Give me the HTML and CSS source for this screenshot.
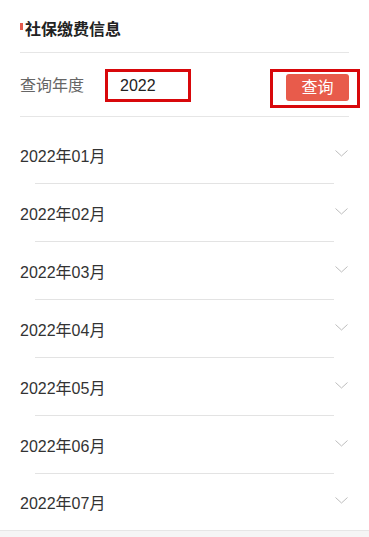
FILE: index.html
```html
<!DOCTYPE html>
<html lang="zh-CN">
<head>
<meta charset="utf-8">
<link rel="stylesheet" href="styles.css">
</head>
<body>
<div class="card">
  <div class="header">
    <span class="bar"></span>
    <span class="title">社保缴费信息</span>
  </div>
  <div class="query">
    <span class="label">查询年度</span>
    <div class="year-box">2022</div>
    <div class="btn-box"><button class="btn">查询</button></div>
  </div>
  <div class="list">
    <div class="row"><span>2022年01月</span><svg class="chev" width="13" height="7" viewBox="0 0 13 7"><polyline points="0.5,0.5 6.5,6 12.5,0.5" fill="none" stroke="#bdbdbd" stroke-width="1"/></svg></div>
    <div class="sep"></div>
    <div class="row"><span>2022年02月</span><svg class="chev" width="13" height="7" viewBox="0 0 13 7"><polyline points="0.5,0.5 6.5,6 12.5,0.5" fill="none" stroke="#bdbdbd" stroke-width="1"/></svg></div>
    <div class="sep"></div>
    <div class="row"><span>2022年03月</span><svg class="chev" width="13" height="7" viewBox="0 0 13 7"><polyline points="0.5,0.5 6.5,6 12.5,0.5" fill="none" stroke="#bdbdbd" stroke-width="1"/></svg></div>
    <div class="sep"></div>
    <div class="row"><span>2022年04月</span><svg class="chev" width="13" height="7" viewBox="0 0 13 7"><polyline points="0.5,0.5 6.5,6 12.5,0.5" fill="none" stroke="#bdbdbd" stroke-width="1"/></svg></div>
    <div class="sep"></div>
    <div class="row"><span>2022年05月</span><svg class="chev" width="13" height="7" viewBox="0 0 13 7"><polyline points="0.5,0.5 6.5,6 12.5,0.5" fill="none" stroke="#bdbdbd" stroke-width="1"/></svg></div>
    <div class="sep"></div>
    <div class="row"><span>2022年06月</span><svg class="chev" width="13" height="7" viewBox="0 0 13 7"><polyline points="0.5,0.5 6.5,6 12.5,0.5" fill="none" stroke="#bdbdbd" stroke-width="1"/></svg></div>
    <div class="sep"></div>
    <div class="row last"><span>2022年07月</span><svg class="chev" width="13" height="7" viewBox="0 0 13 7"><polyline points="0.5,0.5 6.5,6 12.5,0.5" fill="none" stroke="#bdbdbd" stroke-width="1"/></svg></div>
  </div>
</div>
</body>
</html>
```

FILE: styles.css
```css
html, body {
  margin: 0;
  padding: 0;
  background: #f5f5f5;
  font-family: "Liberation Sans", "Noto Sans CJK SC", sans-serif;
}

.card {
  background: #fff;
  border-bottom: 1px solid #e6e6e6;
  padding: 0 20px;
  overflow: hidden;
}

.header {
  height: 45px;
  padding-top: 7px;
  display: flex;
  align-items: center;
  border-bottom: 1px solid #e6e6e6;
}

.bar {
  width: 3px;
  height: 7px;
  background: #e55a4b;
  margin-right: 2px;
  margin-top: -7px;
}

.title {
  font-size: 16px;
  font-weight: bold;
  color: #222;
  line-height: 20px;
}

.query {
  display: flex;
  align-items: flex-start;
  height: 47px;
  padding-top: 16px;
  border-bottom: 1px solid #e6e6e6;
}

.label {
  font-size: 16px;
  color: #666;
  line-height: 33px;
  width: 64px;
}

.year-box {
  margin-left: 21px;
  width: 68px;
  height: 27px;
  border: 3px solid #d8080b;
  padding-left: 12px;
  font-size: 16px;
  line-height: 27px;
  color: #222;
}

.btn-box {
  margin-left: auto;
  margin-right: -11px;
  width: 76px;
  height: 31px;
  border: 3px solid #d8080b;
  padding: 2px 8px 0 0;
  display: flex;
  justify-content: flex-end;
}

.btn {
  width: 63px;
  height: 27px;
  border: none;
  border-radius: 3px;
  background: #e85b4b;
  color: #fff;
  font-family: "Liberation Sans", "Noto Sans CJK SC", sans-serif;
  font-size: 16px;
  padding: 0;
  line-height: 27px;
}

.list {
  padding-top: 9px;
}

.row {
  height: 57px;
  display: flex;
  align-items: center;
  justify-content: space-between;
  font-size: 16px;
  color: #333;
}

.row.last {
  height: 56px;
}

.chev {
  margin-right: 1px;
  margin-top: -3px;
}

.sep {
  height: 1px;
  background: #e3e3e3;
  margin: 0 15px;
}
```
